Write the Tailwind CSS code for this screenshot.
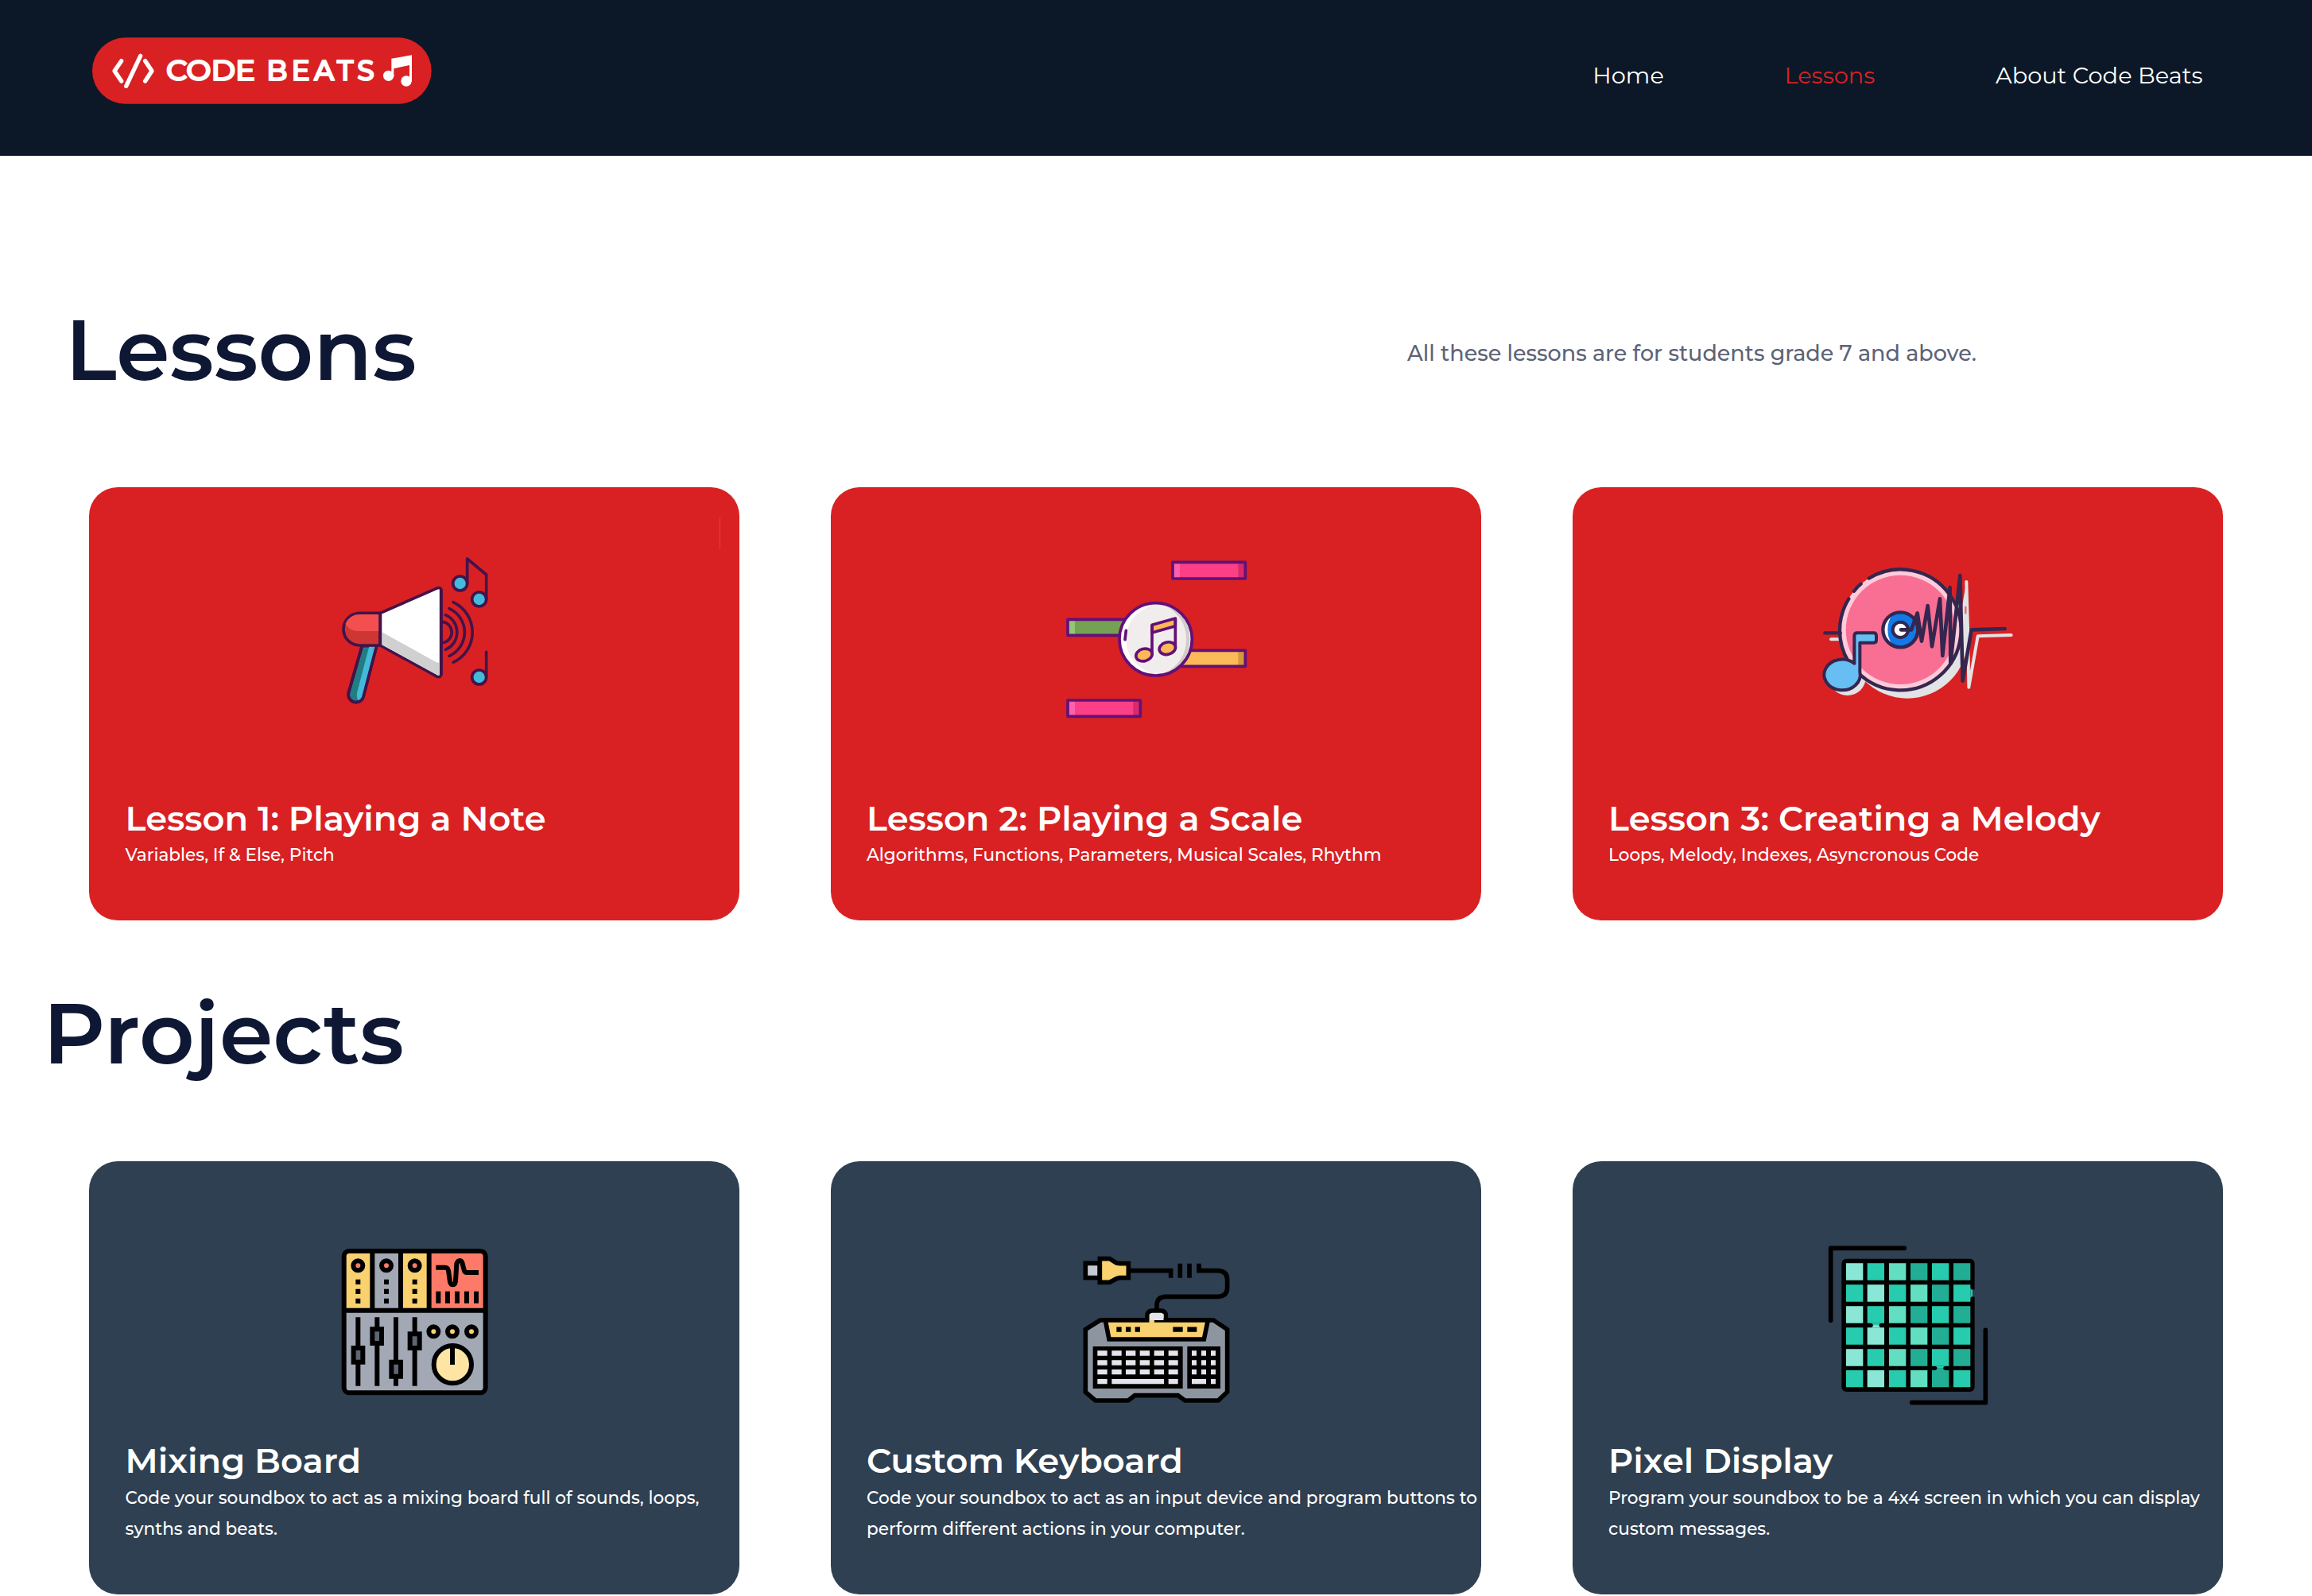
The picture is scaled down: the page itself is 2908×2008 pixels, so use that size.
<!DOCTYPE html>
<html lang="en">
<head>
<meta charset="utf-8">
<title>Code Beats – Lessons</title>
<script src="https://cdn.jsdelivr.net/npm/@tailwindcss/browser@4"></script>
</head>
<body class="h-[2008px] w-[2908px] overflow-hidden bg-white font-['Montserrat','Inter',sans-serif] antialiased">

<header class="flex h-[196px] items-start justify-between border-b-2 border-[#0b1430] bg-[#0c1827] pl-[116px] pr-[137.5px]">
  <a class="mt-[47px] block">
    <svg class="block h-[84px] w-[427px]" viewBox="78 51 1281 252" fill="none">
      <rect x="78" y="52" width="1280" height="250" rx="125" fill="#d92123"/>
      <g stroke="#fff" stroke-width="16" stroke-linecap="round" stroke-linejoin="round">
        <path d="M188 140 162 178 188 216"/>
        <path d="M260 121 206 235"/>
        <path d="M278 140 303 178 278 216"/>
      </g>
      <g font-family="Montserrat, Inter, sans-serif" font-weight="500" font-size="104" fill="#fff" stroke="#fff" stroke-width="6" stroke-linejoin="round">
        <text x="357" y="212" textLength="336" lengthAdjust="spacingAndGlyphs">CODE</text>
        <text x="736" y="212" textLength="406" lengthAdjust="spacing">BEATS</text>
      </g>
      <g fill="#fff">
        <circle cx="1196" cy="196" r="20"/>
        <circle cx="1263" cy="216" r="20"/>
        <path d="M1207 131 1284 118V218H1275V156L1216 169V198H1207Z"/>
      </g>
    </svg>
  </a>
  <nav class="mt-[77px] flex gap-[151.7px] text-[28.8px] leading-[36px] text-white">
    <a>Home</a>
    <a class="text-[#d92123]">Lessons</a>
    <a>About Code Beats</a>
  </nav>
</header>

<main>
  <section>
    <div class="flex items-start pl-[82px] pt-[178px]">
      <h1 class="w-[1688px] text-[108px] font-semibold leading-[130px] text-[#0e1733]">Lessons</h1>
      <p class="mt-[47px] text-[27px] font-medium leading-[48px] text-[#5d6377]">All these lessons are for students grade 7 and above.</p>
    </div>
    <div class="mt-[109px] flex gap-[115px] px-[112px] text-white">

      <article class="relative h-[545px] w-[818px] rounded-[36px] bg-[#d92123]">
        <span class="absolute right-[24px] top-[38px] h-[40px] w-px bg-[#e2403f]"></span>
        <div class="h-[391px] pl-[288px] pt-[67px]">
          <svg class="block h-[230px] w-[260px]" viewBox="0 0 780 690" fill="none" stroke="#43134a" stroke-width="11" stroke-linecap="round" stroke-linejoin="round">
            <path d="M166 398 115 575A29 29 0 0 0 171 590L221 398Z" fill="#227d83"/>
            <path d="M193 400 147 575Q145 600 154 604Q164 600 168 586L216 400Z" fill="#43bad9" stroke="none"/>
            <path d="M166 398 115 575A29 29 0 0 0 171 590L221 398"/>
            <path d="M235 274H157A61 61 0 0 0 157 396H235Z" fill="#cd3633"/>
            <path d="M230 279H157Q118 280 103 315Q120 342 150 342H230Z" fill="#f44f4f" stroke="none"/>
            <path d="M235 274 452 179Q464 176 464 188V504Q464 518 450 514L235 396Z" fill="#fff"/>
            <path d="M240 345 445 459Q455 463 459 460V503Q459 511 450 508L240 393Z" fill="#d1d0d1" stroke="none"/>
            <path d="M235 274V396M465 186V506"/>
            <path d="M471 307A40 40 0 0 1 471 386M481 281A71 71 0 0 1 481 412M495 257A98 98 0 0 1 495 436M510 233A125 125 0 0 1 510 460"/>
            <path d="M563 162V69L635 129V222M635 421V516"/>
            <g fill="#43bad9"><circle cx="536" cy="162" r="27"/><circle cx="608" cy="222" r="27"/><circle cx="608" cy="516" r="27"/></g>
          </svg>
        </div>
        <h2 class="pl-[45.6px] text-[43.2px] font-semibold leading-[52px]">Lesson 1: Playing a Note</h2>
        <p class="pl-[45.6px] text-[21.6px] font-medium leading-[39px]">Variables, If &amp; Else, Pitch</p>
      </article>

      <article class="h-[545px] w-[818px] rounded-[36px] bg-[#d92123]">
        <div class="h-[391px] pl-[275px] pt-[77px]">
          <svg class="block h-[230px] w-[270px]" viewBox="0 0 810 690" fill="none">
            <path fill="#fd3f87" d="M465 52H739V114H465ZM69 573H343V634H69Z"/>
            <path fill="#fd60ac" d="M465 52H492V114H465ZM69 573H96V634H69Z"/>
            <path fill="#d92a6a" d="M712 52H739V114H712ZM316 573H343V634H316Z"/>
            <path fill="#74a153" d="M69 268H300V328H69Z"/><path fill="#94c775" d="M69 268H96V328H69Z"/>
            <path fill="#fbb957" d="M480 385H739V445H480Z"/><path fill="#d69a38" d="M712 385H739V445H712Z"/>
            <path d="M465 52H739V114H465ZM69 573H343V634H69ZM300 268H69V328H300M480 385H739V445H480" stroke="#631078" stroke-width="11" stroke-linejoin="round"/>
            <circle cx="401" cy="343" r="138" fill="#f1edec"/>
            <path d="M401 209A134 134 0 0 0 401 477Q290 440 289 343Q290 246 401 209Z" fill="#fff"/>
            <path d="M430 212A134 134 0 0 1 430 474Q516 430 516 343Q516 256 430 212Z" fill="#d0cdcb"/>
            <path d="M500 253A134 134 0 0 1 500 433Q529 392 529 343Q529 294 500 253Z" fill="#f1edec"/>
            <circle cx="401" cy="343" r="137" stroke="#631078" stroke-width="11"/>
            <g stroke="#631078" stroke-width="11" stroke-linejoin="round">
              <path d="M387 289 475 264V293L387 318Z" fill="#fbb957"/>
              <path d="M387 289V402M475 264V374"/>
              <ellipse cx="357" cy="402" rx="31" ry="23" transform="rotate(-15 357 402)" fill="#fbb957"/>
              <ellipse cx="445" cy="377" rx="31" ry="23" transform="rotate(-15 445 377)" fill="#fbb957"/>
              <path d="M289 310 285 344" stroke-linecap="round"/>
            </g>
          </svg>
        </div>
        <h2 class="pl-[45px] text-[43.2px] font-semibold leading-[52px]">Lesson 2: Playing a Scale</h2>
        <p class="pl-[45px] text-[21.6px] font-medium leading-[39px]">Algorithms, Functions, Parameters, Musical Scales, Rhythm</p>
      </article>

      <article class="h-[545px] w-[818px] rounded-[36px] bg-[#d92123]">
        <div class="h-[391px] pl-[292px] pt-[77px]">
          <svg class="block h-[210px] w-[280px]" viewBox="0 0 840 630" fill="none" stroke-linecap="round" stroke-linejoin="round">
            <circle cx="387" cy="337" r="229" fill="#e1e3e4"/>
            <circle cx="161" cy="485" r="70" fill="#e1e3e4"/>
            <path d="M99 343H135" stroke="#e1e3e4" stroke-width="12"/>
            <path d="M574 170 590 240 610 125 617 250 620 350 619 420 600 400 575 300Z" fill="#e1e3e4"/>
            <path d="M610 126 615 300 619 524 653 331 779 327" stroke="#e1e3e4" stroke-width="12"/>
            <path d="M607 222V244" stroke="#e46a6b" stroke-width="7"/>
            <circle cx="361" cy="307" r="228" fill="#fecbdb"/>
            <circle cx="361" cy="307" r="206" fill="#f86f93"/>
            <path d="M242 113A228 228 0 1 1 200 468M165 428A228 228 0 0 1 166 190M186 161Q197 146 212 134" stroke="#35264f" stroke-width="13"/>
            <path d="M76 319H134" stroke="#35264f" stroke-width="13"/>
            <circle cx="361" cy="307" r="66" fill="#1279e8"/>
            <path d="M330 252A63 63 0 0 0 330 362Q313 340 313 307Q313 274 330 252Z" fill="#fff"/>
            <circle cx="361" cy="307" r="66" stroke="#35264f" stroke-width="13"/>
            <circle cx="361" cy="307" r="29" fill="#fff" stroke="#35264f" stroke-width="12"/>
            <path d="M363 307H402L425 244 441 350 464 216 480 370 510 190 520 405 548 147 550 435 586 102 596 500 629 307 755 303" stroke="#35264f" stroke-width="14"/>
            <path d="M187 434V330Q187 319 198 319H260Q270 319 270 330V346Q270 356 260 356H208V466A68 58 0 1 1 187 434Z" fill="#66bef2" stroke="#35264f" stroke-width="12"/>
          </svg>
        </div>
        <h2 class="pl-[45px] text-[43.2px] font-semibold leading-[52px]">Lesson 3: Creating a Melody</h2>
        <p class="pl-[45px] text-[21.6px] font-medium leading-[39px]">Loops, Melody, Indexes, Asyncronous Code</p>
      </article>
    </div>
  </section>

  <section>
    <h1 class="pl-[54px] pt-[76px] text-[108px] font-semibold leading-[130px] text-[#0e1733]">Projects</h1>
    <div class="mt-[97px] flex gap-[115px] px-[112px] text-white">

      <article class="h-[545px] w-[818px] rounded-[36px] bg-[#2f4052]">
        <div class="h-[351px] pl-[298px] pt-[89px]">
          <svg class="block h-[220px] w-[220px]" viewBox="0 0 660 660" fill="none" stroke="#000" stroke-width="18">
            <rect x="68" y="72" width="534" height="535" rx="20" fill="#a2a8b4" stroke="none"/>
            <path d="M76 81H167V287H76ZM290 81H381V287H290Z" fill="#fad16f" stroke="none"/>
            <path d="M397 81H595V287H397Z" fill="#fd7a68" stroke="none"/>
            <rect x="68" y="72" width="534" height="535" rx="20"/>
            <path d="M68 296H602M175 72V296M282 72V296M389 72V296"/>
            <g fill="#fd7a68"><circle cx="121" cy="127" r="18"/><circle cx="228" cy="127" r="18"/><circle cx="335" cy="127" r="18"/></g>
            <path d="M121 179V270M228 179V270M335 179V270" stroke-dasharray="19 17"/>
            <path d="M415 134H450Q460 134 462 146L468 188Q471 199 478 199Q487 199 489 186L493 120Q497 108 505 108Q513 108 515 120L521 143Q523 153 532 153H576"/>
            <path d="M424 224V269M459 224V269M495 224V269M531 224V269M567 224V269"/>
            <path d="M121 322V581M193 322V581M264 322V581M335 322V581"/>
            <g fill="#5d6674"><path d="M104 438H139V491H104ZM175 367H210V420H175ZM247 491H282V545H247ZM317 385H353V438H317Z"/></g>
            <g fill="#fad16f"><circle cx="406" cy="376" r="18"/><circle cx="477" cy="376" r="18"/><circle cx="549" cy="376" r="18"/></g>
            <circle cx="478" cy="500" r="71" fill="#fee5a3"/>
            <path d="M477 430V501"/>
          </svg>
        </div>
        <h2 class="pl-[45.6px] text-[43.2px] font-semibold leading-[52px]">Mixing Board</h2>
        <p class="mt-px whitespace-nowrap pl-[45.6px] text-[21.6px] font-medium leading-[39px]">Code your soundbox to act as a mixing board full of sounds, loops,<br>synths and beats.</p>
      </article>

      <article class="h-[545px] w-[818px] rounded-[36px] bg-[#2f4052]">
        <div class="h-[351px] pl-[300px] pt-[99px]">
          <svg class="block h-[220px] w-[220px]" viewBox="0 0 660 660" fill="none" stroke="#000" stroke-width="17">
            <path d="M61 88H115V143H61Z" fill="#c5cad3"/>
            <path d="M115 71H152L178 87 190 89H223V143H190L178 146 152 160H115Z" fill="#fad16f"/>
            <path d="M231 116H383V143M418 89V143M453 89V143M489 89V116H562Q596 118 596 150V180Q596 212 562 214H362Q330 216 330 246V262"/>
            <path d="M61 338 116 303H544L596 338V574L562 606H436L410 587H247L222 606H98L61 574Z" fill="#8d95a1"/>
            <path d="M136 303H523L508 375H150Z" fill="#fad16f"/>
            <path d="M294 303V287Q294 267 314 267H345Q364 267 364 287V303" fill="#e1e4ea"/>
            <path d="M302 280H356V295H320V311H302Z" fill="#e1e4ea" stroke="none"/><path d="M302 303H320V312H302Z" fill="#fad16f" stroke="none"/>
            <path d="M178 338H267" stroke-width="19" stroke-dasharray="19 16"/>
            <path d="M391 338H428M445 338H481" stroke-width="19"/>
            <path d="M89 402H428V561H89ZM445 402H570V561H445Z" fill="#000" stroke="none"/>
            <g fill="#e3e5eb" stroke="none">
              <path d="M106 418h37v19h-37zM160 418h37v19h-37zM213 418h37v19h-37zM266 418h37v19h-37zM320 418h37v19h-37zM374 418h36v19h-36zM462 418h18v19h-18zM498 418h18v19h-18zM534 418h18v19h-18z"/>
              <path d="M106 454h37v19h-37zM160 454h37v19h-37zM213 454h37v19h-37zM266 454h37v19h-37zM320 454h37v19h-37zM374 454h36v19h-36zM462 454h18v19h-18zM498 454h18v19h-18zM534 454h18v19h-18z"/>
              <path d="M106 489h37v19h-37zM160 489h37v19h-37zM213 489h37v19h-37zM266 489h37v19h-37zM320 489h37v19h-37zM374 489h36v19h-36zM462 489h18v19h-18zM498 489h18v19h-18zM534 489h18v19h-18z"/>
              <path d="M106 525h37v19h-37zM160 525h197v19h-197zM374 525h36v19h-36zM462 525h54v19h-54zM534 525h18v19h-18z"/>
            </g>
          </svg>
        </div>
        <h2 class="pl-[45px] text-[43.2px] font-semibold leading-[52px]">Custom Keyboard</h2>
        <p class="mt-px whitespace-nowrap pl-[45px] text-[21.6px] font-medium leading-[39px]">Code your soundbox to act as an input device and program buttons to<br>perform different actions in your computer.</p>
      </article>

      <article class="h-[545px] w-[818px] rounded-[36px] bg-[#2f4052]">
        <div class="h-[351px] pl-[302px] pt-[89px]">
          <svg class="block h-[230px] w-[240px]" viewBox="0 0 720 690" fill="none">
            <path d="M68 334V61H346M652 370V644H374" stroke="#000" stroke-width="17" stroke-linecap="round" stroke-linejoin="round"/>
            <rect x="109" y="101" width="502" height="502" rx="18" fill="#000"/>
            <path fill="#8ae7d5" d="M126 118h64v64h-64zM206 199h64v64h-64zM126 280h64v64h-64zM206 361h64v64h-64zM126 442h64v64h-64zM206 522h64v64h-64z"/>
            <path fill="#27cbae" d="M206 118h64v64h-64zM450 118h64v64h-64zM126 199h64v64h-64zM288 199h64v64h-64zM531 199h64v64h-64zM206 280h64v64h-64zM450 280h64v64h-64zM126 361h64v64h-64zM288 361h64v64h-64zM531 361h64v64h-64zM206 442h64v64h-64zM450 442h64v64h-64zM126 522h64v64h-64zM288 522h64v64h-64zM531 522h64v64h-64z"/>
            <path fill="#62dec0" d="M288 118h64v64h-64zM369 199h64v64h-64zM288 280h64v64h-64zM369 361h64v64h-64zM288 442h64v64h-64zM369 522h64v64h-64z"/>
            <path fill="#22ad95" d="M369 118h64v64h-64zM531 118h64v64h-64zM450 199h64v64h-64zM369 280h64v64h-64zM531 280h64v64h-64zM450 361h64v64h-64zM369 442h64v64h-64zM531 442h64v64h-64zM450 522h64v64h-64z"/>
            <path fill="#27cbae" d="M220 344Q228 346 228 353H250Q250 346 258 344ZM462 506Q470 508 470 515H492Q492 508 500 506ZM595 211Q597 219 604 219V243Q597 243 595 251Z"/>
            <path fill="#8ae7d5" d="M220 361Q228 359 228 352H250Q250 359 258 361Z"/>
            <path fill="#22ad95" d="M462 522Q470 520 470 514H492Q492 520 500 522Z"/>
            <path fill="#2f4052" d="M604 217H612V245H604Z"/>
          </svg>
        </div>
        <h2 class="pl-[45px] text-[43.2px] font-semibold leading-[52px]">Pixel Display</h2>
        <p class="mt-px whitespace-nowrap pl-[45px] text-[21.6px] font-medium leading-[39px]">Program your soundbox to be a 4x4 screen in which you can display<br>custom messages.</p>
      </article>
    </div>
  </section>
</main>
</body>
</html>
